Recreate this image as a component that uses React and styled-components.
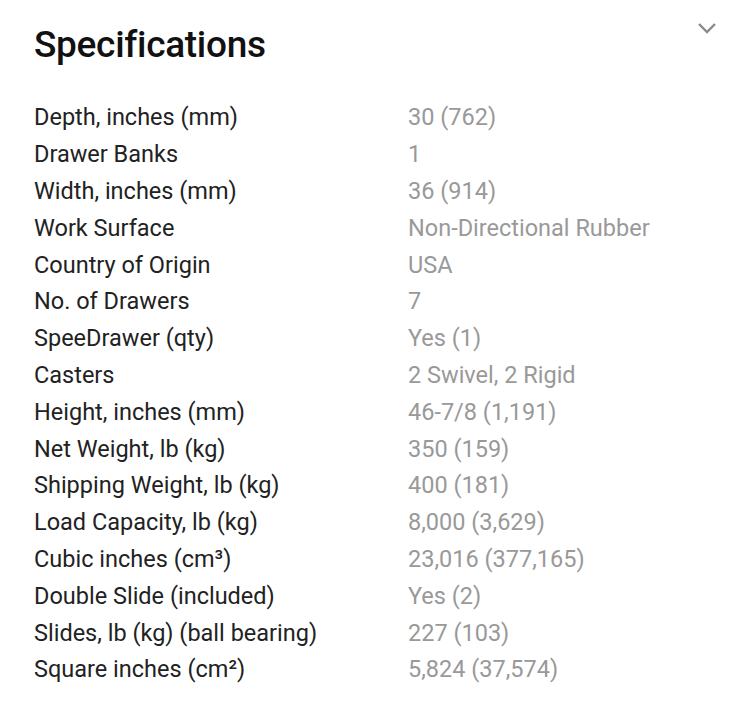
import React from "react";
import styled, { createGlobalStyle } from "styled-components";

const Global = createGlobalStyle`
  html, body { margin: 0; padding: 0; background: #fff; }
  body { font-family: Roboto, "Noto Sans", Arial, sans-serif; }
`;

const Panel = styled.section`
  position: relative;
  padding: 22px 34px 0 34px;
`;

const Title = styled.h2`
  margin: 0;
  font-size: 37px;
  font-weight: 500;
  color: #111;
  line-height: 46px;
  letter-spacing: -0.3px;
`;

const Toggle = styled.button`
  position: absolute;
  top: 16px;
  right: 31px;
  width: 24px;
  height: 24px;
  padding: 0;
  border: 0;
  background: none;
  color: #8a8a8a;
  display: flex;
  align-items: center;
  justify-content: center;
`;

const Table = styled.dl`
  margin: 31px 0 0 0;
  display: grid;
  grid-template-columns: 374px 1fr;
  grid-auto-rows: 36.8px;
  align-items: center;
`;

const Label = styled.dt`
  font-size: 23.5px;
  color: #222;
`;

const Value = styled.dd`
  margin: 0;
  font-size: 23.5px;
  color: #999;
`;

const rows = [
  ["Depth, inches (mm)", "30 (762)"],
  ["Drawer Banks", "1"],
  ["Width, inches (mm)", "36 (914)"],
  ["Work Surface", "Non-Directional Rubber"],
  ["Country of Origin", "USA"],
  ["No. of Drawers", "7"],
  ["SpeeDrawer (qty)", "Yes (1)"],
  ["Casters", "2 Swivel, 2 Rigid"],
  ["Height, inches (mm)", "46-7/8 (1,191)"],
  ["Net Weight, lb (kg)", "350 (159)"],
  ["Shipping Weight, lb (kg)", "400 (181)"],
  ["Load Capacity, lb (kg)", "8,000 (3,629)"],
  ["Cubic inches (cm³)", "23,016 (377,165)"],
  ["Double Slide (included)", "Yes (2)"],
  ["Slides, lb (kg) (ball bearing)", "227 (103)"],
  ["Square inches (cm²)", "5,824 (37,574)"],
];

export default function App() {
  return (
    <>
      <Global />
      <Panel>
        <Title>Specifications</Title>
        <Toggle aria-label="Collapse">
          <svg width="22" height="14" viewBox="0 0 22 14" fill="none">
            <path d="M3 3 L11 11 L19 3" stroke="currentColor" strokeWidth="2.4" />
          </svg>
        </Toggle>
        <Table>
          {rows.map(([k, v]) => (
            <React.Fragment key={k}>
              <Label>{k}</Label>
              <Value>{v}</Value>
            </React.Fragment>
          ))}
        </Table>
      </Panel>
    </>
  );
}
